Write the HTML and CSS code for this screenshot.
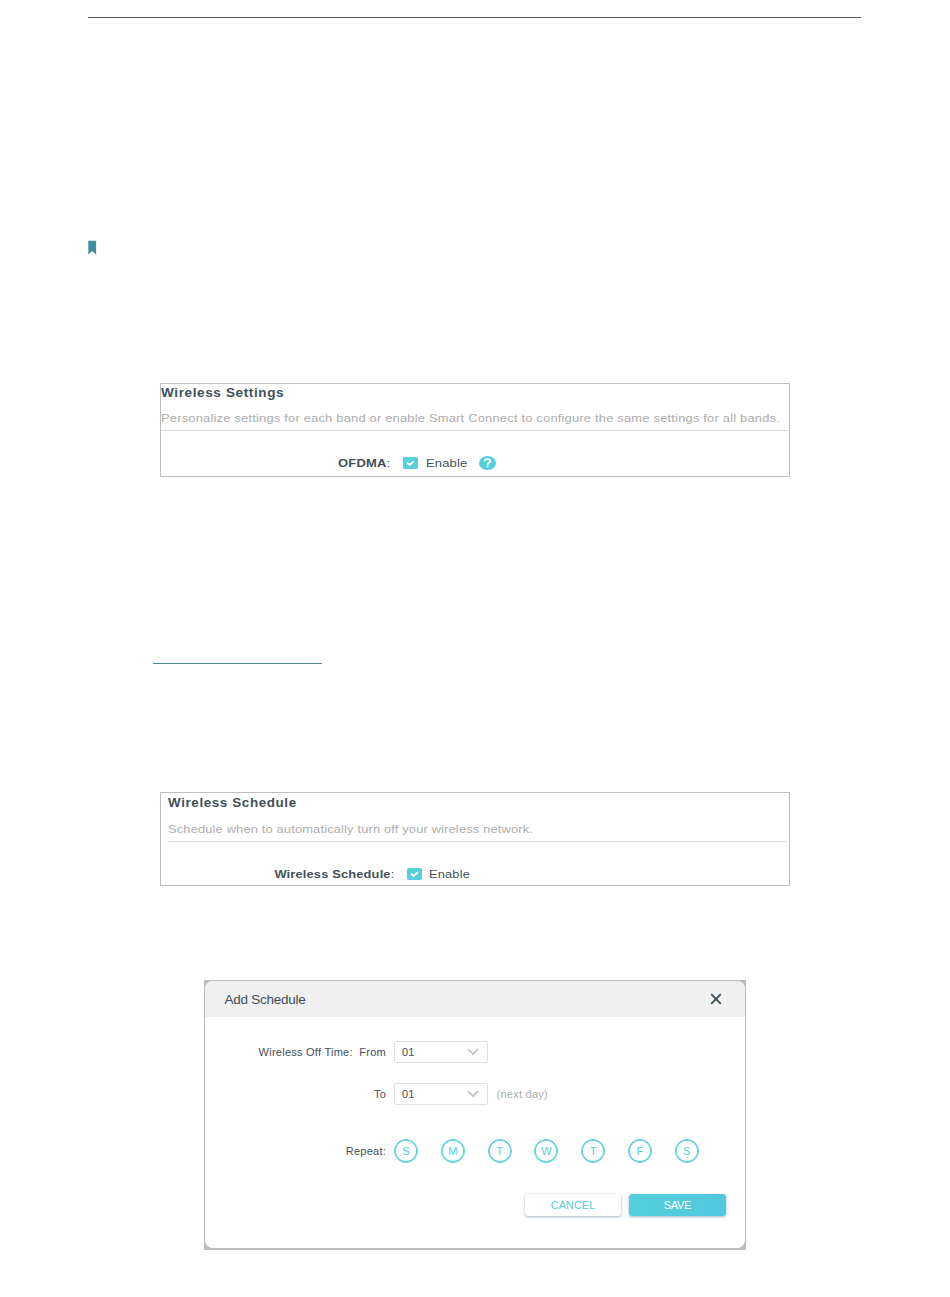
FILE: index.html
```html
<!DOCTYPE html>
<html lang="en">
<head>
    <meta charset="UTF-8">
    <meta name="viewport" content="width=device-width, initial-scale=1.0">
    <title>Wireless Settings</title>
    <link rel="stylesheet" href="styles.css">
</head>
<body>
    <hr class="page-rule">

    <svg class="bookmark" width="9" height="15" viewBox="0 0 9 15">
        <path d="M0.3 0.8H8.1V14.6L4.2 11L0.3 14.6Z" fill="#3f8fa0"/>
    </svg>

    <section class="panel settings">
        <h2><span class="wide">Wireless Settings</span></h2>
        <p class="desc"><span class="wide">Personalize settings for each band or enable Smart Connect to configure the same settings for all bands.</span></p>
        <div class="option">
            <span class="name"><span class="wide right"><b>OFDMA</b>:</span></span>
            <svg class="check" width="15" height="12" viewBox="0 0 15 12">
                <rect width="15" height="12" rx="1.8" fill="#54cfdb"/>
                <path d="M3.9 5.8L6.5 7.8L11 4.2" fill="none" stroke="#fff" stroke-width="1.8"/>
            </svg>
            <span class="value"><span class="wide">Enable</span></span>
            <svg class="help" width="17" height="14" viewBox="0 0 17 14">
                <ellipse cx="8.5" cy="7" rx="8.5" ry="7" fill="#54cfdb"/>
                <path d="M5.6 5.3C5.6 2.4 11.4 2.4 11.4 5C11.4 6.7 8.6 6.6 8.6 8.8" fill="none" stroke="#fff" stroke-width="1.9"/>
                <rect x="7.6" y="9.8" width="2" height="1.5" fill="#fff"/>
            </svg>
        </div>
    </section>

    <hr class="link-rule">

    <section class="panel schedule">
        <h2><span class="wide">Wireless Schedule</span></h2>
        <p class="desc"><span class="wide">Schedule when to automatically turn off your wireless network.</span></p>
        <div class="option">
            <span class="name"><span class="wide right"><b>Wireless Schedule</b>:</span></span>
            <svg class="check" width="15" height="12" viewBox="0 0 15 12">
                <rect width="15" height="12" rx="1.8" fill="#54cfdb"/>
                <path d="M3.9 5.8L6.5 7.8L11 4.2" fill="none" stroke="#fff" stroke-width="1.8"/>
            </svg>
            <span class="value"><span class="wide">Enable</span></span>
        </div>
    </section>

    <div class="dialog-frame">
        <section class="dialog">
            <header>
                <span class="title">Add Schedule</span>
                <svg width="12" height="12" viewBox="0 0 12 12">
                    <path d="M1.2 1.2L10.8 10.8M10.8 1.2L1.2 10.8" stroke="#3c4a54" stroke-width="1.8"/>
                </svg>
            </header>
            <div class="row from">
                <span class="label">Wireless Off Time:&nbsp; From</span>
                <div class="select">
                    <span>01</span>
                    <svg width="12" height="8" viewBox="0 0 12 8"><path d="M1 1.2L6 6.2L11 1.2" fill="none" stroke="#c4c4c4" stroke-width="1.8"/></svg>
                </div>
            </div>
            <div class="row to">
                <span class="label">To</span>
                <div class="select">
                    <span>01</span>
                    <svg width="12" height="8" viewBox="0 0 12 8"><path d="M1 1.2L6 6.2L11 1.2" fill="none" stroke="#c4c4c4" stroke-width="1.8"/></svg>
                </div>
                <span class="hint">(next day)</span>
            </div>
            <div class="row repeat">
                <span class="label">Repeat:</span>
                <div class="days">
                    <span>S</span>
                    <span>M</span>
                    <span>T</span>
                    <span>W</span>
                    <span>T</span>
                    <span>F</span>
                    <span>S</span>
                </div>
            </div>
            <footer>
                <button class="cancel">CANCEL</button>
                <button class="save">SAVE</button>
            </footer>
        </section>
    </div>
</body>
</html>
```

FILE: styles.css
```css
* {
    box-sizing: border-box;
}

body {
    margin: 0;
    height: 1297px;
    display: flex;
    flex-direction: column;
    background: #fff;
    color: #434f59;
    font-family: "Liberation Sans", Arial, sans-serif;
    font-size: 11px;
}

svg {
    display: block;
    flex: none;
}

.page-rule {
    width: 773px;
    height: 1px;
    margin: 17px 0 0 88px;
    border: 0;
    background: #58585a;
}

.bookmark {
    margin: 222px 0 0 88px;
}

.panel {
    width: 630px;
    height: 94px;
    margin-left: 160px;
    border: 1px solid #bdbdbd;
    font-size: 11.5px;
    letter-spacing: 0.15px;
}

.settings {
    margin-top: 128px;
}

.schedule {
    margin-top: 128px;
    padding-left: 7px;
}

.panel h2 {
    height: 18px;
    margin: 0;
    font-size: 12px;
    line-height: 18px;
    letter-spacing: 0.55px;
}

.panel .desc {
    height: 29px;
    margin: 0 1px 0 0;
    padding-top: 8px;
    border-bottom: 1px solid #d9d9d9;
    color: #adadad;
    line-height: 17px;
    white-space: nowrap;
}

.panel.schedule h2 {
    height: 20px;
    line-height: 21px;
}

.panel.schedule .desc {
    margin-right: 2px;
}

.option {
    display: flex;
    align-items: center;
    height: 16px;
    margin-top: 24px;
    white-space: nowrap;
}

.option .name {
    width: 229px;
    text-align: right;
}

.schedule .option .name {
    width: 226px;
}

.option .check {
    margin-left: 13px;
}

.option .value {
    width: 53px;
    margin-left: 8px;
}

.schedule .option .value {
    margin-left: 7px;
}

/* panel lettering is stretched sideways */
.wide {
    display: inline-block;
    transform: scaleX(1.128);
    transform-origin: left;
}

.schedule .wide {
    transform: scaleX(1.117);
}

.wide.right {
    transform-origin: right;
}

.link-rule {
    width: 169px;
    height: 1px;
    margin: 186px 0 0 153px;
    border: 0;
    background: #4b8c97;
}

.dialog-frame {
    width: 542px;
    height: 270px;
    margin: 94px 0 0 204px;
    padding: 1px 1px 2px;
    background: #bdbdbd;
}

.dialog {
    height: 267px;
    border-radius: 8px;
    overflow: hidden;
    background: #fff;
}

.dialog header {
    display: flex;
    align-items: center;
    justify-content: space-between;
    height: 36px;
    padding: 0 23px 0 19.5px;
    background: #f0f0f0;
}

.dialog .title {
    font-size: 13.5px;
    letter-spacing: -0.25px;
}

.row {
    display: flex;
    align-items: center;
    height: 24px;
    letter-spacing: 0.25px;
}

.row .label {
    width: 181px;
    margin-right: 8px;
    text-align: right;
}

.from {
    margin-top: 23px;
}

.to {
    margin-top: 18px;
}

.repeat {
    margin-top: 33px;
}

.select {
    display: flex;
    align-items: center;
    justify-content: space-between;
    width: 94px;
    height: 22px;
    padding: 0 8px 0 7px;
    border: 1px solid #e0e0e0;
    border-radius: 2px;
}

.hint {
    margin-left: 8.5px;
    color: #adadad;
}

.days {
    display: flex;
    gap: 22.8px;
}

.days span {
    width: 24px;
    height: 24px;
    border: 1px solid #54cfdb;
    border-radius: 50%;
    box-shadow: inset 0 0 0 0.8px #54cfdb;
    color: #54cfdb;
    line-height: 22px;
    text-align: center;
    letter-spacing: 0;
}

.dialog footer {
    display: flex;
    justify-content: flex-end;
    gap: 8px;
    margin-top: 31px;
    padding-right: 19px;
}

.dialog button {
    width: 97px;
    height: 22px;
    padding: 0;
    border: 0;
    border-radius: 3px;
    box-shadow: 0 1px 3px rgba(70, 110, 130, 0.5);
    font-family: inherit;
    font-size: 11px;
}

.dialog .cancel {
    width: 96px;
    background: #fff;
    color: #54cfdb;
}

.dialog .save {
    background: linear-gradient(100deg, #54d0db, #51c7e0);
    color: #fff;
    letter-spacing: -0.2px;
}
```
